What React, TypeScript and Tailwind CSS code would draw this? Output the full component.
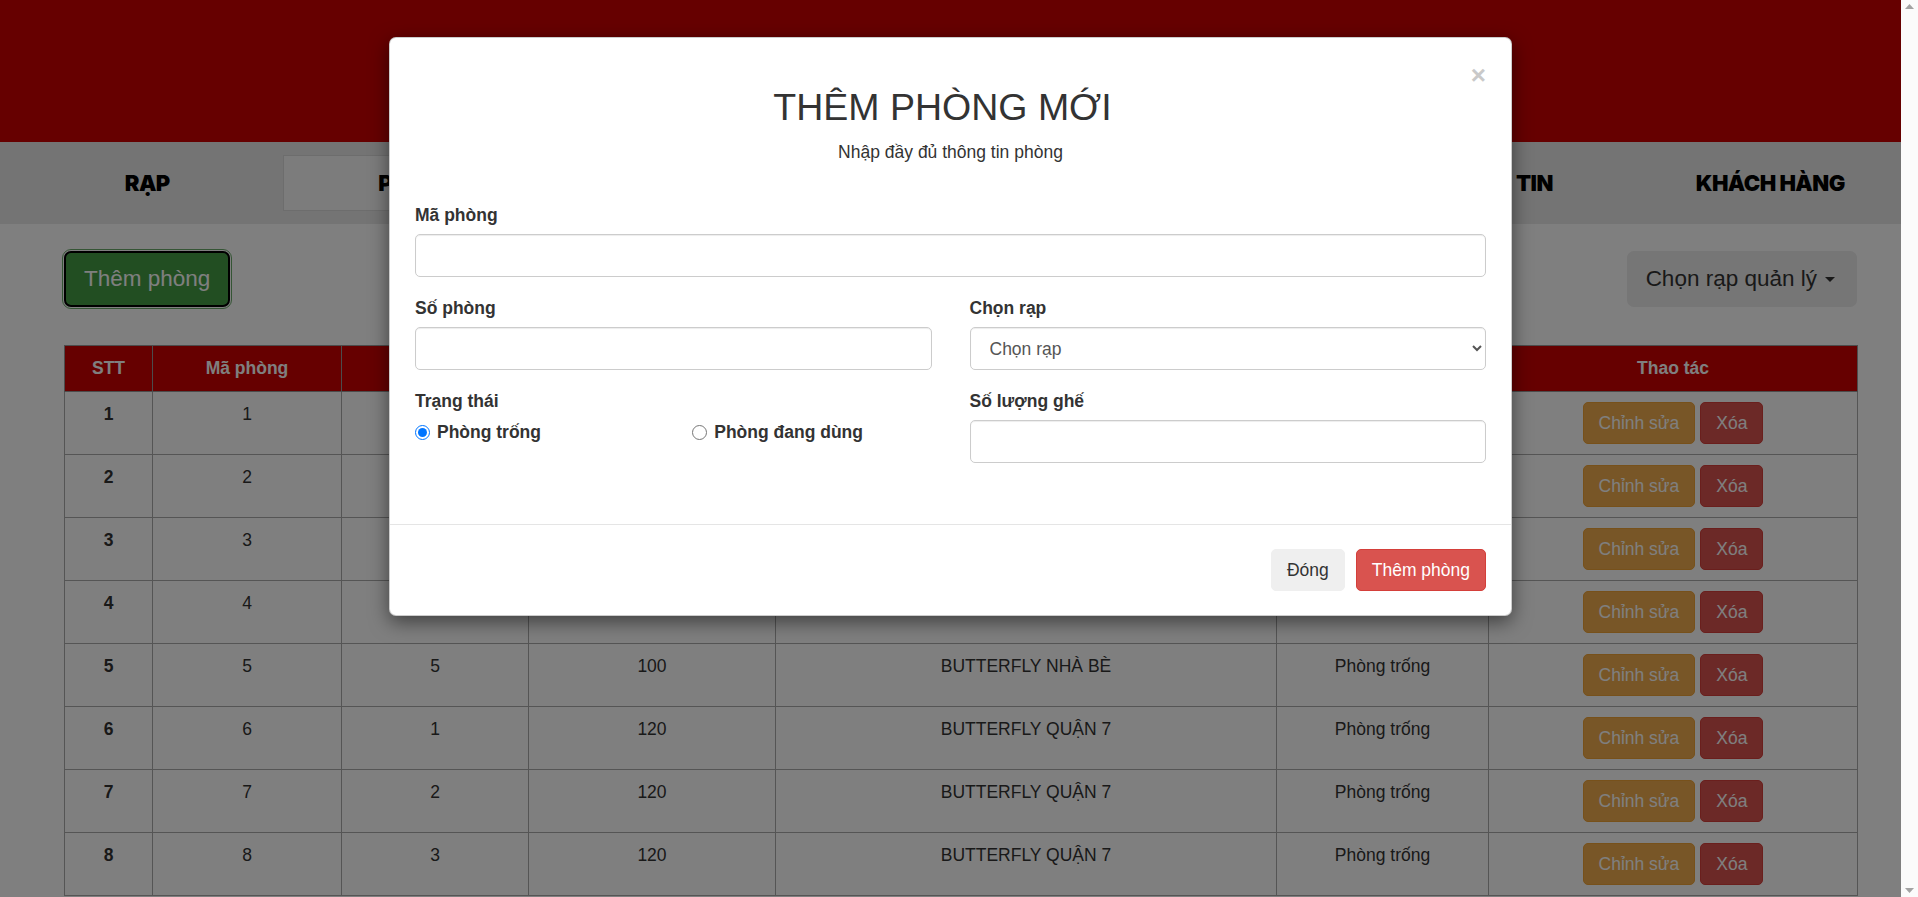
import React from "react";

const navItems = ["RẠP", "PHÒNG", "PHIM", "SUẤT CHIẾU", "LỊCH CHIẾU", "THÔNG TIN", "KHÁCH HÀNG"];

const rooms = [
  { stt: 1, ma: 1, so: 1, ghe: 100, rap: "BUTTERFLY NHÀ BÈ" },
  { stt: 2, ma: 2, so: 2, ghe: 100, rap: "BUTTERFLY NHÀ BÈ" },
  { stt: 3, ma: 3, so: 3, ghe: 100, rap: "BUTTERFLY NHÀ BÈ" },
  { stt: 4, ma: 4, so: 4, ghe: 100, rap: "BUTTERFLY NHÀ BÈ" },
  { stt: 5, ma: 5, so: 5, ghe: 100, rap: "BUTTERFLY NHÀ BÈ" },
  { stt: 6, ma: 6, so: 1, ghe: 120, rap: "BUTTERFLY QUẬN 7" },
  { stt: 7, ma: 7, so: 2, ghe: 120, rap: "BUTTERFLY QUẬN 7" },
  { stt: 8, ma: 8, so: 3, ghe: 120, rap: "BUTTERFLY QUẬN 7" },
];

function RoomTable() {
  return (
    <table className="table-fixed border-collapse w-[1793px] text-[17.5px] leading-[25px] text-[#333]">
      <colgroup>
        <col className="w-[88px]" />
        <col className="w-[189px]" />
        <col className="w-[187px]" />
        <col className="w-[247px]" />
        <col className="w-[501px]" />
        <col className="w-[212px]" />
        <col className="w-[369px]" />
      </colgroup>
      <thead>
        <tr className="bg-[#cc0000] text-white font-bold">
          <th className="border border-[#999] py-[10px]">STT</th>
          <th className="border border-[#999] py-[10px]">Mã phòng</th>
          <th className="border border-[#999] py-[10px]">Số phòng</th>
          <th className="border border-[#999] py-[10px]">Số lượng ghế</th>
          <th className="border border-[#999] py-[10px]">Rạp</th>
          <th className="border border-[#999] py-[10px]">Trạng thái</th>
          <th className="border border-[#999] py-[10px]">Thao tác</th>
        </tr>
      </thead>
      <tbody className="bg-white">
        {rooms.map((r) => (
          <tr key={r.stt} className="text-center align-top">
            <td className="border border-[#aaa] py-[10px] font-bold">{r.stt}</td>
            <td className="border border-[#aaa] py-[10px]">{r.ma}</td>
            <td className="border border-[#aaa] py-[10px]">{r.so}</td>
            <td className="border border-[#aaa] py-[10px]">{r.ghe}</td>
            <td className="border border-[#aaa] py-[10px]">{r.rap}</td>
            <td className="border border-[#aaa] py-[10px]">Phòng trống</td>
            <td className="border border-[#aaa] py-[10px]">
              <div className="flex justify-center gap-[5px]">
                <button className="h-[42px] px-[15px] rounded-[5px] bg-[#f0ad4e] border border-[#eea236] text-white">
                  Chỉnh sửa
                </button>
                <button className="h-[42px] px-[15px] rounded-[5px] bg-[#d9534f] border border-[#d43f3a] text-white">
                  Xóa
                </button>
              </div>
            </td>
          </tr>
        ))}
      </tbody>
    </table>
  );
}

function AddRoomModal() {
  return (
    <div className="relative w-[1123px] mx-auto mt-[37px] bg-white rounded-[7px] border border-black/20 shadow-[0_6px_19px_rgba(0,0,0,0.5)] text-[#333] text-[17.5px] leading-[25px]">
      <button className="absolute top-[24px] right-[25px] text-[26px] leading-none font-bold text-[#c9c9c9]">
        ×
      </button>
      <div className="pt-[49px] text-center">
        <h2 className="text-[37.5px] leading-[41px] pr-[16px]">THÊM PHÒNG MỚI</h2>
        <p className="mt-[12px]">Nhập đầy đủ thông tin phòng</p>
      </div>

      <div className="px-[25px] pt-[38px] pb-[61px]">
        <label className="block font-bold mb-[6px]">Mã phòng</label>
        <input className="block w-full h-[43px] border border-[#ccc] rounded-[5px] shadow-[inset_0_1px_1px_rgba(0,0,0,0.075)] px-[15px]" />

        <div className="grid grid-cols-2 gap-x-[38px] mt-[19px]">
          <div>
            <label className="block font-bold mb-[6px]">Số phòng</label>
            <input className="block w-full h-[43px] border border-[#ccc] rounded-[5px] shadow-[inset_0_1px_1px_rgba(0,0,0,0.075)] px-[15px]" />
          </div>
          <div>
            <label className="block font-bold mb-[6px]">Chọn rạp</label>
            <select className="block w-full h-[43px] border border-[#ccc] rounded-[5px] shadow-[inset_0_1px_1px_rgba(0,0,0,0.075)] px-[15px] text-[#555] bg-white">
              <option>Chọn rạp</option>
              <option>BUTTERFLY NHÀ BÈ</option>
              <option>BUTTERFLY QUẬN 7</option>
            </select>
          </div>

          <div className="mt-[19px]">
            <label className="block font-bold mb-[6px]">Trạng thái</label>
            <div className="grid grid-cols-2 gap-x-[38px]">
              <label className="flex items-center gap-[7px] font-bold">
                <input type="radio" name="trangthai" defaultChecked className="w-[15px] h-[15px] m-0" />
                Phòng trống
              </label>
              <label className="flex items-center gap-[7px] font-bold">
                <input type="radio" name="trangthai" className="w-[15px] h-[15px] m-0" />
                Phòng đang dùng
              </label>
            </div>
          </div>
          <div className="mt-[19px]">
            <label className="block font-bold mb-[6px]">Số lượng ghế</label>
            <input className="block w-full h-[43px] border border-[#ccc] rounded-[5px] shadow-[inset_0_1px_1px_rgba(0,0,0,0.075)] px-[15px]" />
          </div>
        </div>
      </div>

      <div className="border-t border-[#e5e5e5] px-[25px] pt-[24px] pb-[24px] flex justify-end gap-[11px]">
        <button className="h-[42px] px-[15px] rounded-[5px] bg-[#efefef] border border-[#efefef] text-[#333]">
          Đóng
        </button>
        <button className="h-[42px] px-[15px] rounded-[5px] bg-[#d9534f] border border-[#d43f3a] text-white">
          Thêm phòng
        </button>
      </div>
    </div>
  );
}

export default function App() {
  return (
    <div className="flex w-[1918px] h-[897px] overflow-hidden" style={{ fontFamily: '"Liberation Sans", Arial, sans-serif' }}>
      <div className="relative w-[1901px] h-full overflow-hidden bg-white">
        <header className="h-[142px] bg-[#cc0000]" />

        <nav className="h-[82px] bg-[#e8e8e8] grid grid-cols-[repeat(7,270.5px)] pl-[12px] overflow-hidden">
          {navItems.map((item) => (
            <div
              key={item}
              className={
                item === "PHÒNG"
                  ? "my-[13px] flex items-center justify-center bg-[#f8f8f8] border border-[#dadada]"
                  : "flex items-center justify-center"
              }
            >
              <span
                className={
                  item === "THÔNG TIN"
                    ? "text-[22px] font-black tracking-tight text-black [word-spacing:8px] -translate-x-[11px]"
                    : "text-[22px] font-black tracking-tight text-black"
                }
                style={{ fontFamily: "Inter, sans-serif" }}
              >
                {item}
              </span>
            </div>
          ))}
        </nav>

        <main className="pl-[64px] pr-[44px] pt-[27px]">
          <div className="flex justify-between items-start mb-[38px]">
            <button className="h-[56px] px-[18px] rounded-[7px] bg-[#449d44] border-2 border-black outline outline-1 outline-offset-1 outline-[#6aaa6a] text-white text-[22.5px]">
              Thêm phòng
            </button>
            <button className="h-[56px] pl-[19px] pr-[22px] rounded-[7px] bg-[#ececec] text-[#333] text-[22.5px] flex items-center">
              Chọn rạp quản lý
              <span className="inline-block w-0 h-0 ml-[8px] border-t-[5px] border-x-[5px] border-x-transparent border-t-[#333]" />
            </button>
          </div>
          <RoomTable />
        </main>

        <div className="absolute inset-0 bg-black/50">
          <AddRoomModal />
        </div>
      </div>

      <div className="w-[17px] h-full bg-[#fbfbfb] flex flex-col justify-between items-center py-[4px]">
        <svg width="9" height="5" viewBox="0 0 9 5">
          <path d="M0 5 L4.5 0 L9 5 Z" fill="#a3a3a3" />
        </svg>
        <svg width="9" height="5" viewBox="0 0 9 5">
          <path d="M0 0 L4.5 5 L9 0 Z" fill="#a3a3a3" />
        </svg>
      </div>
    </div>
  );
}
